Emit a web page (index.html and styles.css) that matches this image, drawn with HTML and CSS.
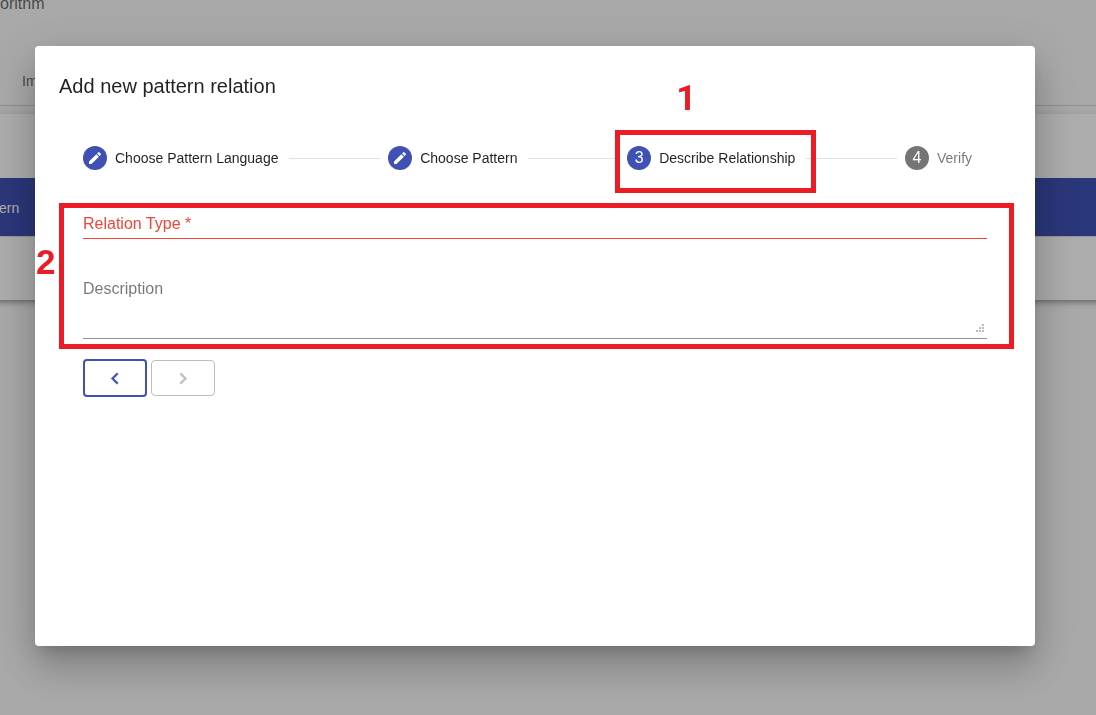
FILE: index.html
```html
<!DOCTYPE html>
<html lang="en">
<head>
<meta charset="utf-8">
<title>Add new pattern relation</title>
<link rel="stylesheet" href="styles.css">
</head>
<body>
<div class="page">
  <header class="page-header">
    <p class="page-title">orithm</p>
    <p class="page-tab">Im</p>
  </header>
  <section class="card">
    <div class="card-space"></div>
    <div class="card-head">ern</div>
    <div class="card-row"></div>
  </section>
</div>

<div class="overlay">
  <main class="dialog" role="dialog" aria-labelledby="dialog-title">
    <h1 class="dialog-title" id="dialog-title">Add new pattern relation</h1>
    <div class="stepper">
      <div class="step">
        <span class="step-icon"><svg class="pencil" viewBox="0 0 24 24"><path d="M3 17.25V21h3.75L17.81 9.94l-3.75-3.75L3 17.25zM20.71 7.04a1 1 0 0 0 0-1.41l-2.34-2.34a1 1 0 0 0-1.41 0l-1.83 1.83 3.75 3.75 1.83-1.83z"/></svg></span>
        <span class="step-label">Choose Pattern Language</span>
      </div>
      <div class="step-line"></div>
      <div class="step">
        <span class="step-icon"><svg class="pencil" viewBox="0 0 24 24"><path d="M3 17.25V21h3.75L17.81 9.94l-3.75-3.75L3 17.25zM20.71 7.04a1 1 0 0 0 0-1.41l-2.34-2.34a1 1 0 0 0-1.41 0l-1.83 1.83 3.75 3.75 1.83-1.83z"/></svg></span>
        <span class="step-label">Choose Pattern</span>
      </div>
      <div class="step-line"></div>
      <div class="step">
        <span class="step-icon">3</span>
        <span class="step-label">Describe Relationship</span>
        <span class="mark mark-step"></span>
        <span class="mark-number number-step">1</span>
      </div>
      <div class="step-line"></div>
      <div class="step step-pending">
        <span class="step-icon">4</span>
        <span class="step-label">Verify</span>
      </div>
    </div>
    <form class="form">
      <div class="field field-error">
        <label class="field-label" for="type">Relation Type *</label>
        <input class="field-input" id="type" type="text">
      </div>
      <div class="field field-area">
        <label class="field-label" for="description">Description</label>
        <textarea class="field-input" id="description"></textarea>
        <svg class="grip" viewBox="0 0 8 8"><path d="M6 0h2v2H6zM3 3h2v2H3zM6 3h2v2H6zM0 6h2v2H0zM3 6h2v2H3zM6 6h2v2H6z"/></svg>
      </div>
      <span class="mark mark-form"></span>
      <span class="mark-number number-form">2</span>
    </form>
    <div class="actions">
      <button class="button button-back" type="button" aria-label="Back"><svg class="chevron" viewBox="0 0 24 24"><path d="M15.41 7.41 14 6l-6 6 6 6 1.41-1.41L10.83 12z"/></svg></button>
      <button class="button" type="button" aria-label="Next" disabled><svg class="chevron" viewBox="0 0 24 24"><path d="M10 6 8.59 7.41 13.17 12l-4.58 4.59L10 18l6-6z"/></svg></button>
    </div>
  </main>
</div>
</body>
</html>
```
FILE: styles.css
```css
* {
  box-sizing: border-box;
}

body {
  margin: 0;
  min-height: 100vh;
  overflow: hidden;
  background: #fafafa;
  font-family: "Liberation Sans", Arial, sans-serif;
  font-size: 14px;
  color: rgba(0, 0, 0, 0.87);
}

.page-header {
  height: 106px;
  border-bottom: 1px solid #d2d2d2;
  color: rgba(0, 0, 0, 0.6);
}

.page-title {
  margin: 0;
  height: 72px;
  font-size: 16px;
  line-height: 8px;
}

.page-tab {
  margin: 0;
  padding-left: 22px;
  line-height: 18px;
}

.card {
  margin: 8px -16px 0;
  background: #fff;
  box-shadow: 0 2px 4px -1px rgba(0, 0, 0, 0.2), 0 4px 5px 0 rgba(0, 0, 0, 0.14), 0 1px 10px 0 rgba(0, 0, 0, 0.12);
}

.card-space {
  height: 64px;
}

.card-head {
  height: 58px;
  padding-left: 15px;
  line-height: 60px;
  background: #3f51b5;
  color: #fff;
}

.card-row {
  height: 64px;
  border-top: 1px solid #dcdcdc;
}

.overlay {
  position: fixed;
  inset: 0;
  display: flex;
  padding: 46px 61px 69px 35px;
  background: rgba(0, 0, 0, 0.32);
}

.dialog {
  flex: 1;
  padding: 24px;
  border-radius: 4px;
  background: #fff;
  box-shadow: 0 11px 15px -7px rgba(0, 0, 0, 0.2), 0 24px 38px 3px rgba(0, 0, 0, 0.14), 0 9px 46px 8px rgba(0, 0, 0, 0.12);
}

.dialog-title {
  margin: 0 0 20px;
  font-size: 20px;
  font-weight: 400;
  line-height: 32px;
}

.stepper {
  display: flex;
  align-items: center;
  height: 72px;
  padding: 0 24px;
}

.step {
  position: relative;
  display: flex;
  align-items: center;
  gap: 8px;
  white-space: nowrap;
}

.step-icon {
  display: flex;
  align-items: center;
  justify-content: center;
  width: 24px;
  height: 24px;
  border-radius: 50%;
  background: #3f51b5;
  color: #fff;
  font-size: 16px;
}

.pencil {
  width: 16px;
  height: 16px;
  fill: #fff;
}

.step-label {
  min-width: 50px;
  padding-right: 3px;
}

.step-pending {
  color: rgba(0, 0, 0, 0.54);
}

.step-pending .step-icon {
  background: #757575;
}

.step-line {
  flex: 1;
  height: 1px;
  margin: 0 8px;
  background: #e0e0e0;
}

.form {
  position: relative;
  padding: 20px 24px 0;
}

.field {
  display: grid;
  border-bottom: 1px solid #949494;
  color: rgba(0, 0, 0, 0.54);
  font-size: 16px;
  line-height: 20px;
}

.field-error {
  border-color: #f44336;
  color: #f44336;
}

.field-area {
  margin-top: 40px;
}

.field-label,
.field-input,
.grip {
  grid-area: 1 / 1;
}

.field-label {
  pointer-events: none;
}

.field-input {
  width: 100%;
  height: 24px;
  padding: 0;
  border: 0;
  outline: 0;
  background: transparent;
  font: inherit;
  resize: none;
}

.field-area .field-input {
  height: 59px;
}

.grip {
  align-self: end;
  justify-self: end;
  width: 8px;
  height: 8px;
  margin: 0 3px 6px 0;
  fill: #bcbcbc;
}

.actions {
  display: flex;
  align-items: center;
  gap: 4px;
  padding: 20px 24px 0;
}

.button {
  display: flex;
  align-items: center;
  justify-content: center;
  width: 64px;
  height: 36px;
  padding: 0;
  border: 1px solid #bdbdbd;
  border-radius: 4px;
  background: #fff;
  color: #bdbdbd;
}

.button-back {
  height: 38px;
  border: 2px solid #3f51b5;
  color: #3f51b5;
}

.chevron {
  width: 24px;
  height: 24px;
  padding-top: 1px;
  fill: currentColor;
  stroke: currentColor;
  stroke-width: 0.5;
}

.mark {
  position: absolute;
  border: 5px solid #ed1c24;
  pointer-events: none;
  z-index: 1;
}

.mark-step {
  inset: -16px -18px -23px -12px;
}

.mark-form {
  inset: 9px -3px -10px 0;
}

.mark-number {
  position: absolute;
  color: #ed1c24;
  font-size: 35px;
  font-weight: 700;
  line-height: 40px;
}

.number-step {
  top: -67px;
  left: 49px;
  font-family: Roboto, "Liberation Sans", sans-serif;
}

.number-form {
  top: 48px;
  left: -23px;
}
```
